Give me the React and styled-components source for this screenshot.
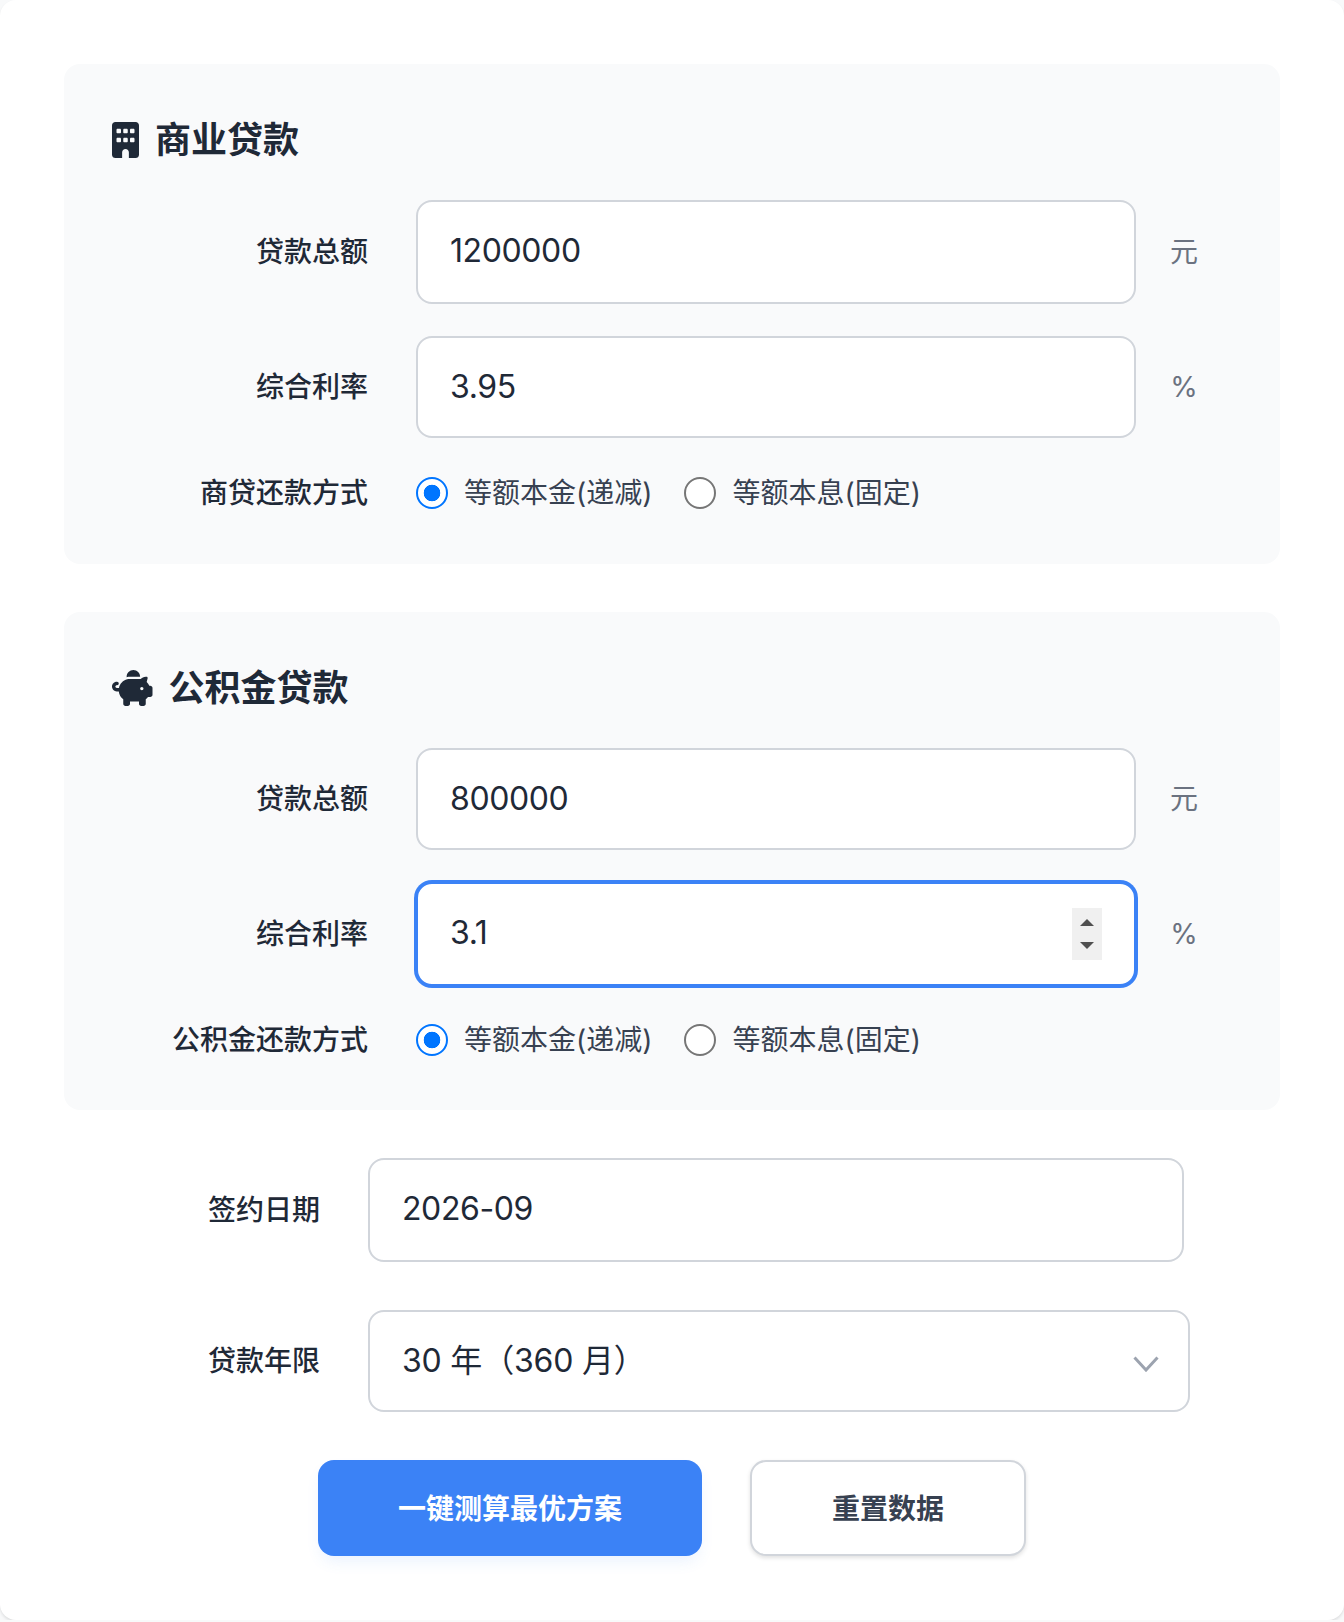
import React from "react";
import styled, { createGlobalStyle } from "styled-components";
import { FaBuilding, FaPiggyBank } from "react-icons/fa6";

const GlobalStyle = createGlobalStyle`
  html, body {
    margin: 0;
    padding: 0;
    background: #f8f9fa;
  }
  body {
    font-family: Inter, "Noto Sans CJK SC", sans-serif;
  }
`;

const Card = styled.div`
  width: 1344px;
  height: 1620px;
  box-sizing: border-box;
  padding: 64px;
  background: #fff;
  border-radius: 16px;
  box-shadow: 0 2px 3px rgba(0, 0, 0, 0.1);
  display: flex;
  flex-direction: column;
  gap: 48px;
`;

const Panel = styled.section`
  background: #f9fafb;
  border-radius: 16px;
  padding: 48px;
  display: flex;
  flex-direction: column;
  gap: 32px;
`;

const PanelTitle = styled.h3`
  margin: 0;
  height: 56px;
  display: flex;
  align-items: center;
  gap: 16px;
  font-size: 36px;
  font-weight: 600;
  color: #1f2937;
`;

const TitleText = styled.span`
  padding-bottom: 6px;
`;

const BuildingIcon = styled(FaBuilding)`
  width: 27px;
  height: 36px;
`;

const PiggyIcon = styled(FaPiggyBank)`
  width: 40.5px;
  height: 36px;
`;

const Row = styled.div`
  display: flex;
  align-items: center;
  gap: 48px;
  min-height: ${p => p.$height || 0}px;
`;

const Label = styled.label`
  flex: 0 0 256px;
  box-sizing: border-box;
  padding-bottom: 4px;
  text-align: right;
  font-size: 28px;
  font-weight: 500;
  color: #1f2937;
`;

const Unit = styled.span`
  flex: 0 0 32px;
  box-sizing: border-box;
  margin-left: -16px;
  margin-right: 32px;
  padding-bottom: ${p => (p.$cjk ? 4 : 0)}px;
  text-align: center;
  font-size: 28px;
  color: #6b7280;
`;

const InputWrap = styled.div`
  position: relative;
  flex: 0 0 ${p => p.$width}px;
  display: flex;
`;

const Input = styled.input`
  width: 100%;
  height: ${p => p.$height}px;
  box-sizing: border-box;
  padding: 0 32px ${p => p.$height - 100}px;
  font: inherit;
  font-size: 32px;
  letter-spacing: -0.4px;
  color: #1f2937;
  background: #fff;
  border: 2px solid ${p => (p.$focused ? "#3b82f6" : "#d1d5db")};
  border-radius: 16px;
  outline: none;
  box-shadow: ${p => (p.$focused ? "0 0 0 2px #3b82f6" : "none")};
`;

const Select = styled.select`
  width: 100%;
  height: 102px;
  box-sizing: border-box;
  padding: 0 32px 2px;
  font: inherit;
  font-size: 32px;
  letter-spacing: -0.2px;
  color: #1f2937;
  background: #fff;
  border: 2px solid #d1d5db;
  border-radius: 16px;
  outline: none;
  appearance: none;
`;

const Chevron = styled.svg`
  position: absolute;
  right: 31px;
  top: 46px;
  width: 26px;
  height: 16px;
  pointer-events: none;
`;

const Spinner = styled.div`
  position: absolute;
  right: 34px;
  top: 26px;
  width: 30px;
  height: 52px;
  background: #f0f0f0;
  display: flex;
  flex-direction: column;
  align-items: center;
  justify-content: center;
  gap: 16px;

  svg {
    display: block;
    width: 14px;
    height: 7px;
    fill: #505050;
  }
`;

const Radios = styled.div`
  display: flex;
  align-items: center;
  gap: 32px;
`;

const RadioLabel = styled.label`
  display: flex;
  align-items: center;
  gap: 16px;
  font-size: 28px;
  color: #374151;
`;

const RadioText = styled.span`
  padding-bottom: 4px;
`;

const Radio = styled.input.attrs({ type: "radio" })`
  appearance: none;
  box-sizing: border-box;
  width: 32px;
  height: 32px;
  margin: 0;
  background: #fff;
  border: 2.5px solid #767676;
  border-radius: 50%;

  &:checked {
    border-color: #0075ff;
    background: radial-gradient(circle, #0075ff 0 8px, #fff 8.6px);
  }
`;

const Actions = styled.div`
  display: flex;
  justify-content: center;
  gap: 48px;
`;

const Button = styled.button`
  height: 96px;
  padding: 0 80px 2px;
  box-sizing: border-box;
  font: inherit;
  font-size: 28px;
  font-weight: 700;
  border-radius: 16px;
  cursor: pointer;
  color: ${p => (p.$primary ? "#fff" : "#374151")};
  background: ${p => (p.$primary ? "#3b82f6" : "#fff")};
  border: ${p => (p.$primary ? "none" : "2px solid #d1d5db")};
  box-shadow: ${p =>
    p.$primary
      ? "0 8px 16px -4px rgba(59, 130, 246, 0.12)"
      : "0 2px 4px rgba(0, 0, 0, 0.12)"};
`;

const LoanPanel = ({ icon, title, amount, rate, focused, amountHeight, rateHeight, radioHeight, methodLabel, name }) => (
  <Panel>
    <PanelTitle>
      {icon}
      <TitleText>{title}</TitleText>
    </PanelTitle>
    <Row>
      <Label>贷款总额</Label>
      <InputWrap $width={720}>
        <Input type="text" readOnly value={amount} $height={amountHeight} />
      </InputWrap>
      <Unit $cjk>元</Unit>
    </Row>
    <Row>
      <Label>综合利率</Label>
      <InputWrap $width={720}>
        <Input type="text" readOnly value={rate} $height={rateHeight} $focused={focused} />
        {focused && (
          <Spinner>
            <svg viewBox="0 0 14 7"><path d="M7 0l7 7H0z" /></svg>
            <svg viewBox="0 0 14 7"><path d="M0 0h14L7 7z" /></svg>
          </Spinner>
        )}
      </InputWrap>
      <Unit>%</Unit>
    </Row>
    <Row $height={radioHeight}>
      <Label>{methodLabel}</Label>
      <Radios>
        <RadioLabel>
          <Radio name={name} defaultChecked />
          <RadioText>等额本金(递减)</RadioText>
        </RadioLabel>
        <RadioLabel>
          <Radio name={name} />
          <RadioText>等额本息(固定)</RadioText>
        </RadioLabel>
      </Radios>
    </Row>
  </Panel>
);

export default function App() {
  return (
    <>
      <GlobalStyle />
      <Card>
        <LoanPanel
          icon={<BuildingIcon />}
          title="商业贷款"
          amount="1200000"
          rate="3.95"
          amountHeight={104}
          rateHeight={102}
          radioHeight={46}
          methodLabel="商贷还款方式"
          name="commercial"
        />
        <LoanPanel
          icon={<PiggyIcon />}
          title="公积金贷款"
          amount="800000"
          rate="3.1"
          focused
          amountHeight={102}
          rateHeight={104}
          radioHeight={44}
          methodLabel="公积金还款方式"
          name="fund"
        />
        <Row>
          <Label>签约日期</Label>
          <InputWrap $width={816}>
            <Input type="text" readOnly value="2026-09" $height={104} />
          </InputWrap>
        </Row>
        <Row>
          <Label>贷款年限</Label>
          <InputWrap $width={822}>
            <Select defaultValue="30">
              <option value="30">30 年（360 月）</option>
            </Select>
            <Chevron viewBox="0 0 26 16" fill="none" stroke="#9ca3af" strokeWidth="3">
              <path d="M1.5 1.5L13 14 24.5 1.5" />
            </Chevron>
          </InputWrap>
        </Row>
        <Actions>
          <Button $primary>一键测算最优方案</Button>
          <Button>重置数据</Button>
        </Actions>
      </Card>
    </>
  );
}
